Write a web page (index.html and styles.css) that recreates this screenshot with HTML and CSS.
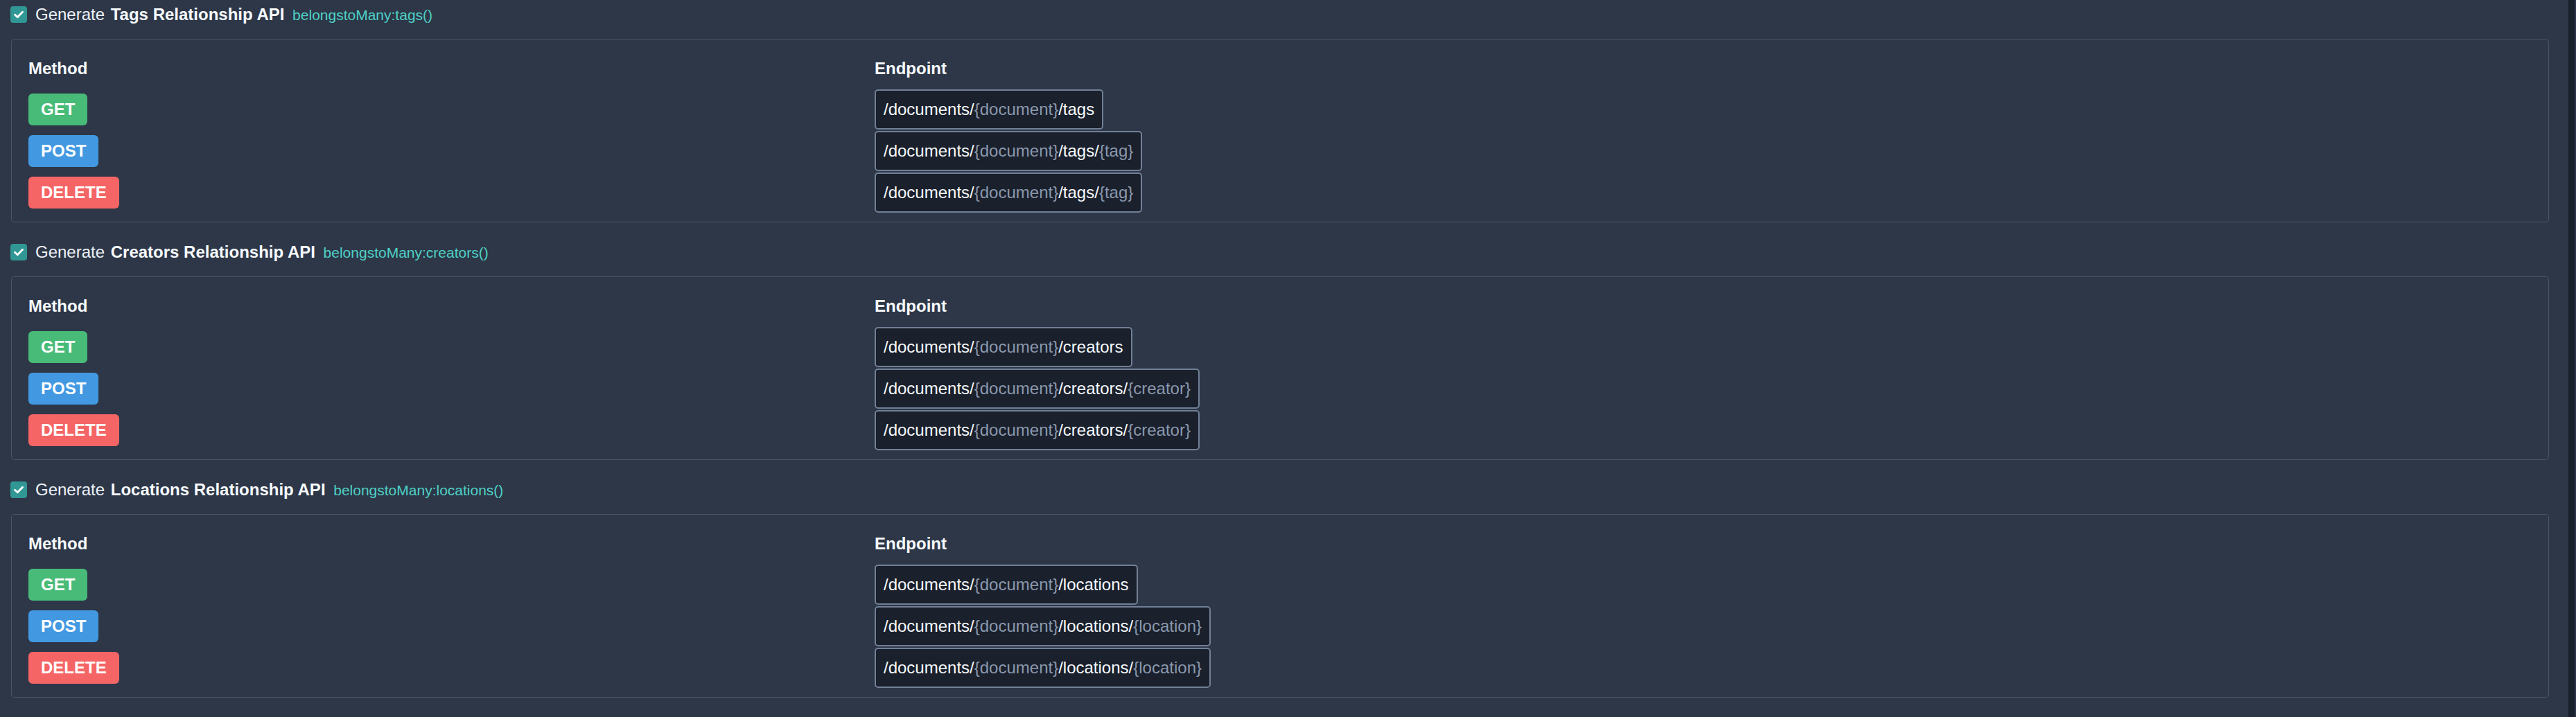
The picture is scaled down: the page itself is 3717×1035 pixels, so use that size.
FILE: index.html
```html
<!DOCTYPE html>
<html lang="en">
<head>
<meta charset="utf-8">
<title>Relationship API</title>
<link rel="stylesheet" href="styles.css">
</head>
<body>
<div class="page">
  <main class="content">

    <section class="rel">
      <label class="rel-head">
        <span class="check"><svg viewBox="0 0 24 24" width="24" height="24"><path d="M6.5 12.3 L10.3 15.8 L17.6 8.2" fill="none" stroke="#fff" stroke-width="2.8" stroke-linecap="round" stroke-linejoin="round"/></svg></span>
        <span class="rel-title">Generate <strong>Tags Relationship API</strong> <span class="rel-fn">belongstoMany:tags()</span></span>
      </label>
      <div class="panel">
        <div class="grid">
          <div class="th">Method</div>
          <div class="th">Endpoint</div>
          <div class="cell"><span class="badge get">GET</span></div>
          <div class="cell"><span class="ep">/documents/<span class="ph">{document}</span>/tags</span></div>
          <div class="cell"><span class="badge post">POST</span></div>
          <div class="cell"><span class="ep">/documents/<span class="ph">{document}</span>/tags/<span class="ph">{tag}</span></span></div>
          <div class="cell"><span class="badge delete">DELETE</span></div>
          <div class="cell"><span class="ep">/documents/<span class="ph">{document}</span>/tags/<span class="ph">{tag}</span></span></div>
        </div>
      </div>
    </section>

    <section class="rel">
      <label class="rel-head">
        <span class="check"><svg viewBox="0 0 24 24" width="24" height="24"><path d="M6.5 12.3 L10.3 15.8 L17.6 8.2" fill="none" stroke="#fff" stroke-width="2.8" stroke-linecap="round" stroke-linejoin="round"/></svg></span>
        <span class="rel-title">Generate <strong>Creators Relationship API</strong> <span class="rel-fn">belongstoMany:creators()</span></span>
      </label>
      <div class="panel">
        <div class="grid">
          <div class="th">Method</div>
          <div class="th">Endpoint</div>
          <div class="cell"><span class="badge get">GET</span></div>
          <div class="cell"><span class="ep">/documents/<span class="ph">{document}</span>/creators</span></div>
          <div class="cell"><span class="badge post">POST</span></div>
          <div class="cell"><span class="ep">/documents/<span class="ph">{document}</span>/creators/<span class="ph">{creator}</span></span></div>
          <div class="cell"><span class="badge delete">DELETE</span></div>
          <div class="cell"><span class="ep">/documents/<span class="ph">{document}</span>/creators/<span class="ph">{creator}</span></span></div>
        </div>
      </div>
    </section>

    <section class="rel">
      <label class="rel-head">
        <span class="check"><svg viewBox="0 0 24 24" width="24" height="24"><path d="M6.5 12.3 L10.3 15.8 L17.6 8.2" fill="none" stroke="#fff" stroke-width="2.8" stroke-linecap="round" stroke-linejoin="round"/></svg></span>
        <span class="rel-title">Generate <strong>Locations Relationship API</strong> <span class="rel-fn">belongstoMany:locations()</span></span>
      </label>
      <div class="panel">
        <div class="grid">
          <div class="th">Method</div>
          <div class="th">Endpoint</div>
          <div class="cell"><span class="badge get">GET</span></div>
          <div class="cell"><span class="ep">/documents/<span class="ph">{document}</span>/locations</span></div>
          <div class="cell"><span class="badge post">POST</span></div>
          <div class="cell"><span class="ep">/documents/<span class="ph">{document}</span>/locations/<span class="ph">{location}</span></span></div>
          <div class="cell"><span class="badge delete">DELETE</span></div>
          <div class="cell"><span class="ep">/documents/<span class="ph">{document}</span>/locations/<span class="ph">{location}</span></span></div>
        </div>
      </div>
    </section>

  </main>
  <div class="scrollbar"></div>
</div>
</body>
</html>
```
FILE: styles.css
```css
html, body {
  margin: 0;
  padding: 0;
  background: #2d3748;
  height: 100%;
}
body {
  font-family: "Liberation Sans", Arial, sans-serif;
  color: #f7fafc;
  overflow: hidden;
}
.page {
  display: flex;
  min-height: 1035px;
}
.content {
  flex: 1;
  padding: 3px 28px 0 15px;
}
.scrollbar {
  width: 9px;
  margin-right: 2px;
  background: #1a202c;
  flex: none;
}
.rel {
  margin-bottom: 25px;
}
.rel-head {
  display: flex;
  align-items: center;
  height: 36px;
  margin-bottom: 17px;
}
.check {
  width: 24px;
  height: 24px;
  border-radius: 4px;
  background: #319795;
  display: inline-flex;
  flex: none;
  margin-right: 12px;
}
.check svg {
  display: block;
}
.rel-title {
  font-size: 24px;
  line-height: 36px;
  color: #edf2f7;
  white-space: nowrap;
}
.rel-title strong {
  font-weight: 700;
  color: #f7fafc;
  margin-left: 2px;
}
.rel-fn {
  font-size: 21px;
  color: #4fd1c5;
  margin-left: 5px;
}
.panel {
  margin-left: 1px;
  border: 1px solid #4a5568;
  border-radius: 5px;
  padding: 24px 24px 11px 24px;
  height: 265px;
  box-sizing: border-box;
}
.grid {
  display: grid;
  grid-template-columns: 1221px 1fr;
}
.th {
  font-size: 24px;
  line-height: 36px;
  font-weight: 700;
  color: #f7fafc;
  margin-bottom: 12px;
}
.cell {
  height: 58px;
  margin-bottom: 2px;
  display: flex;
  align-items: center;
}
.badge {
  display: inline-flex;
  align-items: center;
  height: 46px;
  padding: 0 18px;
  border-radius: 6px;
  font-size: 24px;
  font-weight: 700;
  color: #ffffff;
}
.get { background: #48bb78; }
.post { background: #4299e1; }
.delete { background: #f56565; }
.ep {
  display: inline-flex;
  align-items: center;
  height: 58px;
  box-sizing: border-box;
  padding: 0 11px;
  border: 2px solid #718096;
  border-radius: 5px;
  background: #1a202c;
  font-size: 24px;
  color: #f7fafc;
  white-space: pre;
}
.ph {
  color: #8a98ad;
}
```
